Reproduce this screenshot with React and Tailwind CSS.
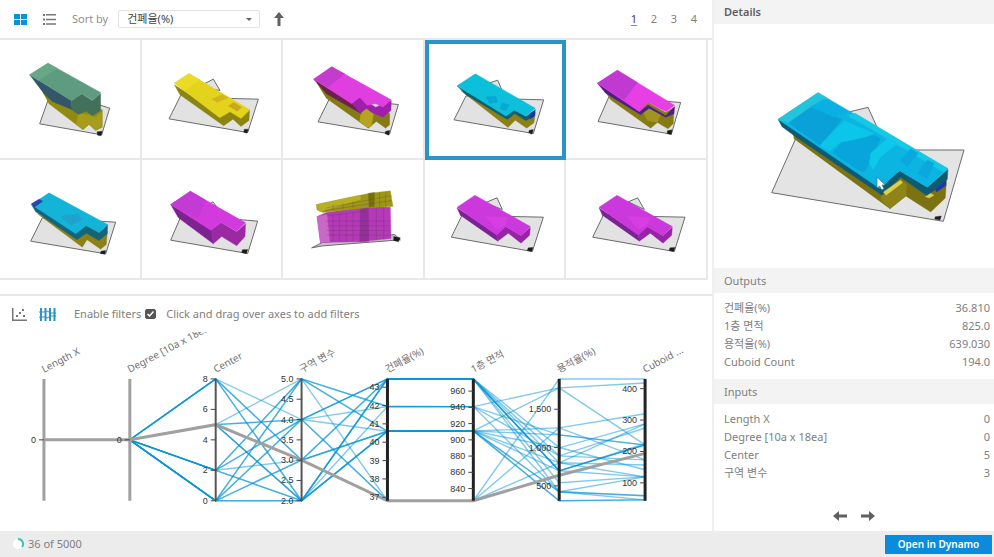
import React, { useState } from 'react';

const BLUE = '#0696d7';

// Each model is a list of [points, fill, stroke] polygons, drawn back to front
const plane = '#e2e2e2';
const planeEdge = '#6b6b6b';

const MODELS = [
  {
    id: 'm1',
    viewBox: '0 121 423 356',
    shapes: [
      ['122,372 158,270 332,325 308,405', plane, planeEdge],
      ['132,278 240,330 310,330 310,382 290,392 270,374 252,390 150,312', '#8f8a10'],
      ['238,340 268,345 288,352 308,335 308,380 290,390 270,372 250,388 232,372', '#a89d1a'],
      ['92,225 218,303 218,328 245,340 160,305 135,282 120,262', '#33566b'],
      ['218,303 248,282 280,302 305,280 305,332 280,348 262,334 238,344 218,330', '#43705a'],
      ['92,225 147,190 305,278 282,302 248,282 218,303', '#5f9c7f'],
      ['92,225 147,190 175,206 118,242', '#68a886'],
      ['294,396 310,394 306,408 296,406', '#1b1b1b'],
    ],
  },
  {
    id: 'm2',
    viewBox: '428 121 423 356',
    shapes: [
      ['598,262 645,238 665,272', plane, planeEdge],
      ['512,357 548,285 700,296 780,298 748,398', plane, planeEdge],
      ['528,255 660,340 686,325 700,335 728,350 754,330 752,362 728,380 704,358 676,378 545,285', '#8d8310'],
      ['528,250 572,221 755,330 728,356 695,336 664,354', '#e3d31c'],
      ['528,250 572,221 605,240 560,272', '#ebdb28'],
      ['640,298 672,284 690,294 656,308', '#d2b71c'],
      ['690,318 706,308 730,322 716,334', '#c9a81c'],
      ['738,388 750,388 746,400 736,397', '#1b1b1b'],
    ],
  },
  {
    id: 'm3',
    viewBox: '10 31 423 356',
    shapes: [
      ['115,276 150,205 356,224 330,312', plane, planeEdge],
      ['112,160 240,235 330,250 330,285 318,295 290,275 266,295 140,205', '#857a14'],
      ['245,240 262,236 282,250 275,290 262,292 240,275', '#b5a422'],
      ['102,148 215,218 240,240 245,252 140,192', '#6a2348'],
      ['215,220 240,202 288,232 335,212 334,242 310,262 280,250 260,236 242,250', '#9c21a8'],
      ['102,148 156,111 335,210 310,232 288,222 262,226 240,202 216,222', '#e03fe0'],
      ['102,148 156,111 195,132 145,172', '#c43bd0'],
      ['318,304 330,302 328,316 316,312', '#1b1b1b'],
    ],
  },
  {
    id: 'm4',
    viewBox: '437 31 423 356',
    shapes: [
      ['620,160 655,148 668,178', plane, planeEdge],
      ['524,267 560,195 720,205 793,207 762,308', plane, planeEdge],
      ['545,180 680,255 708,238 740,256 768,244 764,276 742,292 708,268 686,290', '#8c8016'],
      ['533,165 680,253 706,236 740,258 768,236 766,254 740,270 706,248 684,266 560,192', '#125c70'],
      ['533,165 588,129 768,232 740,256 704,238 680,256', '#0cc0dc'],
      ['620,198 650,196 655,214 630,218', '#0aa6d4'],
      ['668,216 690,222 680,240 662,234', '#0aa6d4'],
      ['752,248 766,240 766,256 752,264', '#1238a8'],
      ['750,298 762,296 758,310 748,305', '#1b1b1b'],
    ],
  },
  {
    id: 'm5',
    viewBox: '26 121 423 356',
    shapes: [
      ['122,365 155,290 370,308 342,403', plane, planeEdge],
      ['135,262 250,325 272,308 325,338 350,322 348,372 332,387 300,368 280,385 160,300', '#857a14'],
      ['255,332 285,325 310,345 300,368 270,362', '#a0951f'],
      ['120,250 248,335 272,316 325,348 352,320 350,342 325,352 275,325 250,345 145,280', '#4a1f8a'],
      ['120,250 180,211 352,316 326,336 272,308 246,336', '#e83fe4'],
      ['120,250 180,211 240,248 200,300', '#c03ad2'],
      ['330,393 344,390 342,404 330,402', '#1b1b1b'],
    ],
  },
  {
    id: 'm6',
    viewBox: '0 17 423 356',
    shapes: [
      ['95,260 130,190 350,203 320,298', plane, planeEdge],
      ['115,178 232,240 262,222 325,230 322,270 305,284 264,256 250,278', '#8c8016'],
      ['97,150 230,232 262,212 300,236 326,210 325,238 300,258 262,236 234,256 110,172', '#14657c'],
      ['97,150 150,115 326,210 300,234 262,214 230,238', '#13b4d8'],
      ['97,148 120,134 132,140 106,158', '#2845b0'],
      ['185,185 235,180 250,196 215,212', '#20a2cc'],
      ['306,290 320,288 318,299 304,297', '#1b1b1b'],
    ],
  },
  {
    id: 'm7',
    viewBox: '428 17 423 356',
    shapes: [
      ['632,150 644,142 656,158', plane, planeEdge],
      ['517,257 550,180 778,200 748,297', plane, planeEdge],
      ['517,150 640,225 645,268 540,190', '#7c2390'],
      ['638,226 668,204 715,232 742,208 740,246 715,274 670,246 645,268', '#9a2aa4'],
      ['517,150 576,110 742,205 715,230 668,204 638,228', '#d23ade'],
      ['517,150 576,110 620,136 600,192', '#c43ad4'],
      ['732,286 748,285 744,298 730,294', '#1b1b1b'],
    ],
  },
  {
    id: 'm8',
    viewBox: '10 17 423 356',
    shapes: [
      ['96,280 128,264 345,240 362,256 130,274', '#c4c4c4', planeEdge],
      ['112,186 140,174 262,156 332,158 334,252 240,262 122,264', '#b43ab8'],
      ['112,186 142,180 150,262 122,264', '#c869c8'],
      ['242,160 266,158 268,260 240,262', '#93309a'],
      ['110,150 270,116 332,109 340,156 262,160 130,174 112,166', '#9d9716'],
      ['110,150 240,122 244,134 120,172', '#b8b024'],
      ['266,117 284,114 284,156 268,158', '#77700f'],
      ['342,246 362,250 356,262 342,258', '#1b1b1b'],
    ],
    // floor slabs
    lines: [
      'M142 184 258 170M136 200H334M140 214H334M142 228H334M140 242H334',
      'M140 160 336 124M136 168 336 138M160 150V168M190 145V164M220 140V160M300 114V156M318 112V156M160 180V262M180 178V262M200 176V260M220 174V260M290 160V254M312 160V254',
    ],
  },
  {
    id: 'm9',
    viewBox: '437 17 423 356',
    shapes: [
      ['620,145 656,130 672,165', plane, planeEdge],
      ['519,248 552,180 700,186 795,188 762,291', plane, planeEdge],
      ['536,160 655,240 658,260 546,182', '#7a2392'],
      ['655,240 682,216 728,244 756,218 754,242 728,266 690,236 658,260', '#9a22a8'],
      ['536,158 590,122 756,216 728,244 682,216 655,242', '#cb38dc'],
      ['620,185 690,188 680,214 655,225', '#d63ee2'],
      ['750,280 764,279 760,291 746,288', '#1b1b1b'],
    ],
  },
  {
    id: 'm10',
    viewBox: '863 17 423 356',
    shapes: [
      ['1050,142 1078,130 1098,165', plane, planeEdge],
      ['943,248 976,180 1124,186 1220,188 1188,291', plane, planeEdge],
      ['962,160 1080,240 1083,260 972,182', '#7a2392'],
      ['1080,240 1107,216 1154,244 1182,218 1180,242 1154,266 1116,236 1083,260', '#9a22a8'],
      ['962,158 1016,122 1182,216 1154,244 1107,216 1080,242', '#cb38dc'],
      ['1045,185 1115,188 1105,214 1080,225', '#d63ee2'],
      ['1175,280 1190,279 1186,291 1172,288', '#1b1b1b'],
    ],
  },
];

const PREVIEW = {
  viewBox: '0 -138 840 732',
  shapes: [
    ['405,126 462,112 492,178', plane, planeEdge],
    ['173,368 245,206 600,240 750,240 688,454', '#e4e4e4', planeEdge],
    ['238,190 505,352 570,315 640,362 698,325 694,384 650,426 575,378 528,416 240,206', '#7d7212'],
    ['505,368 560,332 578,342 576,378 528,416 500,388', '#8f8418'],
    ['660,352 696,330 696,346 668,366', '#1b35b4'],
    ['192,148 498,346 558,302 640,352 702,298 700,328 640,378 560,322 504,376 250,204 204,170', '#0e5a72'],
    ['508,366 560,330 566,338 516,376', '#ddd04a'],
    ['634,380 650,370 660,376 646,384', '#ddd04a'],
    ['192,148 312,68 702,296 640,352 556,302 498,356', '#0cb4e2'],
    ['192,148 312,68 340,84 224,160', '#22c4dc'],
    ['224,158 290,112 384,148 318,226', '#0aa0d8'],
    ['290,110 330,88 400,124 360,142', '#0ab0e4'],
    ['318,226 390,152 480,190 440,208 380,216 346,244', '#0cc6ea'],
    ['356,248 384,218 482,196 500,206 452,306 432,300', '#08a4dc'],
    ['400,136 424,130 702,296 688,306', '#14c8e6'],
    ['470,250 520,206 550,222 500,260 478,300 466,280', '#0cc8ea'],
    ['560,270 590,236 612,250 580,290', '#0aa8dc'],
    ['612,310 640,270 660,280 640,326', '#0aa8dc'],
    ['664,440 682,438 678,450 662,447', '#1b1b1b'],
  ],
  cursor: 'M489 322v32l8-6 6 12 7-4-6-11h10z',
};

const OUTPUTS = [
  ['건폐율(%)', '36.810'],
  ['1층 면적', '825.0'],
  ['용적율(%)', '639.030'],
  ['Cuboid Count', '194.0'],
];

const INPUTS = [
  ['Length X', '0'],
  ['Degree [10a x 18ea]', '0'],
  ['Center', '5'],
  ['구역 변수', '3'],
];

const TOP = 47;
const HEIGHT = 122;

const AXES = [
  { x: 44, label: 'Length X', min: -1, max: 1, ticks: [['0', 0]], fixed: true },
  { x: 130, label: 'Degree [10a x 18ea]', min: -1, max: 1, ticks: [['0', 0]], fixed: true },
  { x: 216, label: 'Center', min: 0, max: 8, ticks: [['8', 8], ['6', 6], ['4', 4], ['2', 2], ['0', 0]] },
  {
    x: 302, label: '구역 변수', min: 2, max: 5,
    ticks: [['5.0', 5], ['4.5', 4.5], ['4.0', 4], ['3.5', 3.5], ['3.0', 3], ['2.5', 2.5], ['2.0', 2]],
  },
  {
    x: 388, label: '건폐율(%)', min: 36.81, max: 43.45, bold: true,
    ticks: [['43', 43], ['42', 42], ['41', 41], ['40', 40], ['39', 39], ['38', 38], ['37', 37]],
  },
  {
    x: 474, label: '1층 면적', min: 825, max: 975, bold: true,
    ticks: [['960', 960], ['940', 940], ['920', 920], ['900', 900], ['880', 880], ['860', 860], ['840', 840]],
  },
  { x: 560, label: '용적율(%)', min: 305, max: 1896, bold: true, ticks: [['1,500', 1500], ['1,000', 1000], ['500', 500]] },
  { x: 646, label: 'Cuboid ...', min: 43, max: 431, bold: true, ticks: [['400', 400], ['300', 300], ['200', 200], ['100', 100]] },
];

const A = [43.45, 975];
const B = [41.95, 941];
const C = [40.6, 911];
const D = [36.81, 825];

// center, zone, [coverage, floor area], floor area ratio, cuboid count
const RUNS = [
  [8, 4, A, 696, 221],
  [8, 3, A, 696, 221],
  [8, 2, A, 892, 173],
  [8, 3, C, 422, 119],
  [8, 2, C, 305, 46],
  [5, 5, B, 1779, 418],
  [5, 4, A, 696, 225],
  [5, 4, B, 1166, 221],
  [5, 2, A, 1000, 142],
  [5, 2, C, 422, 59],
  [2, 5, C, 1779, 221],
  [2, 4, C, 1166, 220],
  [2, 3, C, 800, 157],
  [2, 2, B, 422, 46],
  [2, 4, D, 1896, 431],
  [0, 5, D, 1257, 320],
  [0, 4, A, 422, 59],
  [0, 3, A, 540, 119],
  [0, 2, C, 696, 119],
  [0, 2, A, 800, 119],
  [0, 5, B, 892, 275],
  [0, 3, C, 996, 288],
  [2, 2, A, 696, 221],
  [0, 4, D, 800, 288],
  [2, 5, C, 1257, 173],
  [5, 2, C, 305, 46],
];

const SELECTED_RUN = [5, 3, D, 639, 194];

const scale = (axis, v) => TOP + HEIGHT - ((v - axis.min) / (axis.max - axis.min)) * HEIGHT;

const toPoints = ([center, zone, [coverage, area], ratio, count]) =>
  [0, 0, center, zone, coverage, area, ratio, count]
    .map((v, i) => `${AXES[i].x},${scale(AXES[i], v).toFixed(1)}`)
    .join(' ');

const Model = ({ model, className }) => (
  <svg viewBox={model.viewBox} className={className} aria-hidden="true">
    {model.shapes.map(([points, fill, stroke], i) => (
      <polygon
        key={i}
        points={points}
        fill={fill}
        stroke={stroke || fill}
        strokeWidth={stroke ? 3 : 1}
        strokeLinejoin="round"
      />
    ))}
    {model.lines?.map((d) => (
      <path key={d} d={d} stroke="#5e2a50" strokeOpacity="0.35" strokeWidth="2" fill="none" />
    ))}
    {model.cursor && <path d={model.cursor} fill="#fff" stroke="#2d6f86" strokeWidth="2" />}
  </svg>
);

const FatArrow = ({ className }) => (
  <svg viewBox="0 0 14 10" className={className} aria-hidden="true">
    <path d="M0 5 6 0v3.500h8v3H6V10z" fill="#606060" />
  </svg>
);

const ParallelPlot = () => (
  <svg viewBox="0 0 713 198" className="block w-full" role="img" aria-label="Parallel coordinates">
    <g fill="none" stroke={BLUE} strokeOpacity="0.5" strokeWidth="1.4">
      {RUNS.map((run, i) => (
        <polyline key={i} points={toPoints(run)} />
      ))}
    </g>
    <polyline points={toPoints(SELECTED_RUN)} fill="none" stroke="#a0a0a0" strokeWidth="3" />
    {AXES.map((axis) => (
      <g key={axis.label}>
        <line
          x1={axis.x}
          x2={axis.x}
          y1={TOP}
          y2={TOP + HEIGHT}
          stroke={axis.fixed ? '#a0a0a0' : axis.bold ? '#222' : '#555'}
          strokeWidth={axis.fixed || axis.bold ? 3 : 2}
        />
        {axis.ticks.map(([text, v]) => (
          <g key={text}>
            <line x1={axis.x - 5} x2={axis.x} y1={scale(axis, v)} y2={scale(axis, v)} stroke="#444" />
            <text x={axis.x - 8} y={scale(axis, v) + 3} textAnchor="end" fill="#333" className="font-['Liberation_Sans'] text-[9px]">
              {text}
            </text>
          </g>
        ))}
        <text
          transform={`translate(${axis.x} ${TOP - 6}) rotate(-28)`}
          fill="#707070"
          className="text-[10px]"
        >
          {axis.label}
        </text>
      </g>
    ))}
  </svg>
);

const Section = ({ title, rows }) => (
  <section>
    <h3 className="flex h-[25px] items-center bg-[#f3f3f3] px-2.5">{title}</h3>
    <dl className="pt-[6px] pr-1 pb-2 pl-2.5">
      {rows.map(([name, value]) => (
        <div key={name} className="flex h-[18px] items-center justify-between">
          <dt>{name}</dt>
          <dd>{value}</dd>
        </div>
      ))}
    </dl>
  </section>
);

const App = () => {
  const [selected, setSelected] = useState('m4');
  const [page, setPage] = useState(1);
  const [filters, setFilters] = useState(true);

  return (
    <div className="flex min-h-screen flex-col bg-white font-['Noto_Sans','Noto_Sans_CJK_KR',sans-serif] text-[11px] leading-[14px] text-[#808080]">
      <div className="flex flex-1">
        <main className="flex min-w-0 flex-1 flex-col">
          {/* Toolbar */}
          <div className="flex h-[40px] items-center border-b-2 border-[#e8e8e8] pl-3.5">
            <button aria-label="Grid view">
              <svg viewBox="0 0 13 11" className="h-[11px] w-[13px]" fill={BLUE}>
                <path d="M0 0h6v5H0zM7 0h6v5H7zM0 6h6v5H0zM7 6h6v5H7z" />
              </svg>
            </button>
            <button aria-label="List view" className="ml-4">
              <svg viewBox="0 0 13 11" className="h-[11px] w-[13px]" fill="#777">
                <path d="M0 0h2v2H0zM3 0h10v1.500H3zM0 4.500h2v2H0zM3 4.700h10v1.500H3zM0 9h2v2H0zM3 9.300h10v1.500H3z" />
              </svg>
            </button>
            <label htmlFor="sort" className="ml-4 text-[#909090]">Sort by</label>
            <div className="relative ml-2.5">
              <select
                id="sort"
                className="h-[18px] w-[142px] appearance-none rounded-xs border border-[#e2e2e2] bg-white pl-2 text-[#444]"
              >
                <option>건폐율(%)</option>
                <option>1층 면적</option>
                <option>용적율(%)</option>
              </select>
              <svg viewBox="0 0 6 3" className="pointer-events-none absolute top-2 right-2 h-[3px] w-[6px]">
                <path d="M0 0h6L3 3z" fill="#666" />
              </svg>
            </div>
            <button aria-label="Sort ascending" className="ml-3">
              <FatArrow className="h-[10px] w-[14px] rotate-90" />
            </button>
            <nav className="mr-3 ml-auto flex gap-2">
              {[1, 2, 3, 4].map((n) => (
                <button
                  key={n}
                  onClick={() => setPage(n)}
                  className={`w-3 ${page === n ? 'text-[#444] underline decoration-[#2bb3a8] underline-offset-2' : ''}`}
                >
                  {n}
                </button>
              ))}
            </nav>
          </div>

          {/* Thumbnails */}
          <div className="mr-1 grid grid-cols-5">
            {MODELS.map((model) => (
              <button
                key={model.id}
                aria-label={`Design ${model.id}`}
                onClick={() => setSelected(model.id)}
                className={`flex h-[120px] items-center justify-center ${
                  selected === model.id ? 'border-4 border-[#2a93c8]' : 'border-r-2 border-b-2 border-[#e8e8e8]'
                }`}
              >
                <Model model={model} className="h-[119px] w-[141px] shrink-0" />
              </button>
            ))}
          </div>

          {/* Chart */}
          <div className="mt-3.5 border-t-2 border-[#e8e8e8]">
            <div className="flex h-[36px] items-center pl-3">
              <button aria-label="Scatter plot">
                <svg viewBox="0 0 15 13" className="h-[13px] w-[15px]" fill="#777">
                  <path d="M0 0h1.500v11.500H15V13H0zM4 7h2v2H4zM7 4h2v2H7zM11 7h2v2h-2zM10 1h2v2h-2z" />
                </svg>
              </button>
              <button aria-label="Parallel coordinates" className="ml-3">
                <svg viewBox="0 0 17 13" className="h-[13px] w-[17px]" fill="none" stroke="#2a93c8">
                  <path d="M2 0v13M6.500 0v13M11 0v13M15.500 0v13" strokeWidth="2" />
                  <path d="M0 4h5l3-1 4 2h5M0 9h5l3 1 4-2h5" />
                </svg>
              </button>
              <label htmlFor="filters" className="ml-[18px]">Enable filters</label>
              <span className="relative ml-1 flex">
                <input
                  id="filters"
                  type="checkbox"
                  checked={filters}
                  onChange={() => setFilters(!filters)}
                  className="h-[10px] w-[11px] appearance-none rounded-xs border border-[#555] checked:bg-[#555]"
                />
                {filters && (
                  <svg viewBox="0 0 11 10" className="pointer-events-none absolute inset-0 h-[10px] w-[11px]">
                    <path d="m2.500 5 2 2 4-4.500" stroke="#fff" strokeWidth="1.500" fill="none" />
                  </svg>
                )}
              </span>
              <p className="ml-2.5">Click and drag over axes to add filters</p>
            </div>
            <ParallelPlot />
          </div>
        </main>

        {/* Details */}
        <aside className="flex w-[282px] shrink-0 flex-col border-l-2 border-[#f0f0f0]">
          <h2 className="flex h-[24px] items-center bg-[#f3f3f3] px-2.5 font-semibold text-[#606060]">Details</h2>
          <Model model={PREVIEW} className="h-[244px] w-full" />
          <Section title="Outputs" rows={OUTPUTS} />
          <Section title="Inputs" rows={INPUTS} />
          <div className="mt-auto flex justify-center gap-3.5 pb-2.5">
            <button aria-label="Previous design">
              <FatArrow className="h-[10px] w-[14px]" />
            </button>
            <button aria-label="Next design">
              <FatArrow className="h-[10px] w-[14px] rotate-180" />
            </button>
          </div>
        </aside>
      </div>

      <footer className="flex h-[26px] items-center bg-[#ececec] pl-3">
        <svg viewBox="0 0 12 12" className="h-[12px] w-[12px]">
          <circle cx="6" cy="6" r="5" fill="#fff" />
          <path d="M6 1a5 5 0 0 1 4 8" fill="none" stroke="#3cc0b8" strokeWidth="2" />
        </svg>
        <span className="ml-1">36 of 5000</span>
        <button className="mr-0.5 ml-auto h-[19px] w-[107px] bg-[#0a8bdc] text-[10px] font-semibold text-white">
          Open in Dynamo
        </button>
      </footer>
    </div>
  );
};

export default App;
